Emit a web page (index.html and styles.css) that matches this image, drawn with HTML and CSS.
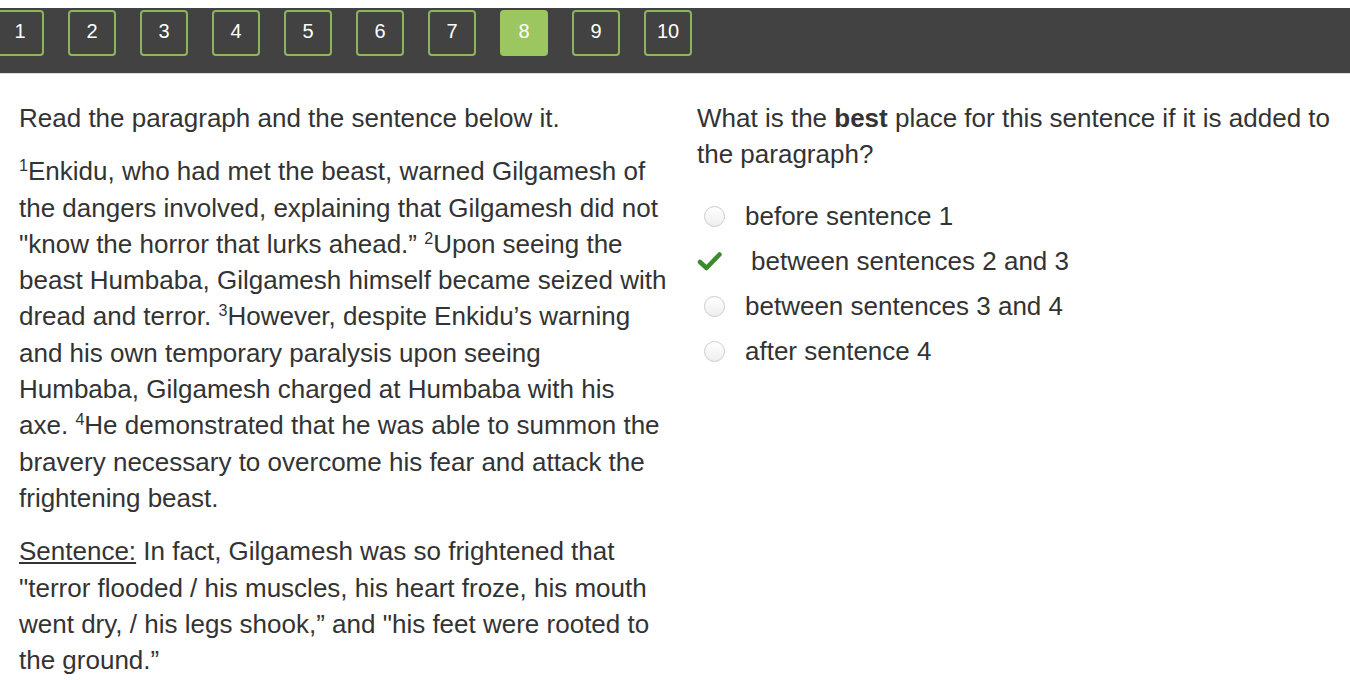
FILE: index.html
```html
<!DOCTYPE html>
<html lang="en">
<head>
    <meta charset="UTF-8">
    <title>Question 8</title>
    <link rel="stylesheet" href="styles.css">
</head>
<body>

<nav class="pager">
    <div class="pager-list">
        <span class="page">1</span>
        <span class="page">2</span>
        <span class="page">3</span>
        <span class="page">4</span>
        <span class="page">5</span>
        <span class="page">6</span>
        <span class="page">7</span>
        <span class="page active">8</span>
        <span class="page">9</span>
        <span class="page">10</span>
    </div>
</nav>

<div class="question">
    <!-- Passage -->
    <div class="passage">
        <p>Read the paragraph and the sentence below it.</p>
        <p><sup>1</sup>Enkidu, who had met the beast, warned Gilgamesh of the dangers involved, explaining that Gilgamesh did not "know the horror that lurks ahead.” <sup>2</sup>Upon seeing the beast Humbaba, Gilgamesh himself became seized with dread and terror. <sup>3</sup>However, despite Enkidu’s warning and his own temporary paralysis upon seeing Humbaba, Gilgamesh charged at Humbaba with his axe. <sup>4</sup>He demonstrated that he was able to summon the bravery necessary to overcome his fear and attack the frightening beast.</p>
        <p><u>Sentence:</u> In fact, Gilgamesh was so frightened that "terror flooded / his muscles, his heart froze, his mouth went dry, / his legs shook,” and "his feet were rooted to the ground.”</p>
    </div>

    <!-- Answer choices -->
    <div class="prompt">
        <p>What is the <b>best</b> place for this sentence if it is added to the paragraph?</p>
        <ul class="choices">
            <li><span class="radio"></span>before sentence 1</li>
            <li class="correct">
                <svg class="check" width="26" height="20" viewBox="0 0 26 20"><path d="M3 11 L9.5 17 L22.5 3.5" fill="none" stroke="#3b8a2b" stroke-width="4.5" stroke-linecap="round" stroke-linejoin="round"/></svg>
                between sentences 2 and 3
            </li>
            <li><span class="radio"></span>between sentences 3 and 4</li>
            <li><span class="radio"></span>after sentence 4</li>
        </ul>
    </div>
</div>

</body>
</html>
```

FILE: styles.css
```css
body {
    font-family: 'Liberation Sans', Arial, sans-serif;
    color: #333;
    background-color: #fff;
    margin: 0;
    padding: 8px 0 0;
    overflow: hidden;
}
.pager {
    background-color: #424242;
    height: 65px;
    border-bottom: 1px solid #ddd;
    overflow: hidden;
}
.pager-list {
    display: flex;
    gap: 24px;
    margin-left: -4px;
    padding-top: 2px;
}
.page {
    box-sizing: border-box;
    width: 48px;
    height: 46px;
    padding-bottom: 3px;
    border: 2px solid #8db45a;
    border-radius: 4px;
    color: #fff;
    font-size: 20px;
    display: flex;
    align-items: center;
    justify-content: center;
    flex-shrink: 0;
}
.page.active {
    background-color: #9cc65f;
    border-color: #9cc65f;
}
.question {
    display: flex;
    padding: 0 0 0 19px;
}
.passage {
    width: 648px;
    margin-right: 30px;
}
.prompt {
    flex: 1;
}
p {
    font-size: 26px;
    line-height: 36.3px;
    margin: 0 0 17px;
}
.passage p:first-child, .prompt p {
    margin-top: 26px;
}
.prompt p {
    margin-bottom: 21px;
}
sup {
    font-size: 0.62em;
    line-height: 0;
    vertical-align: 0.55em;
}
.choices {
    list-style: none;
    margin: 0;
    padding: 0;
}
.choices li {
    display: flex;
    align-items: center;
    height: 45px;
    font-size: 26px;
}
.radio {
    box-sizing: border-box;
    width: 21px;
    height: 21px;
    border: 1px solid #ccc;
    border-radius: 50%;
    background: linear-gradient(#fff, #eee);
    margin: 0 20px 0 7px;
}
.check {
    margin: 0 28px 0 0;
}
```
